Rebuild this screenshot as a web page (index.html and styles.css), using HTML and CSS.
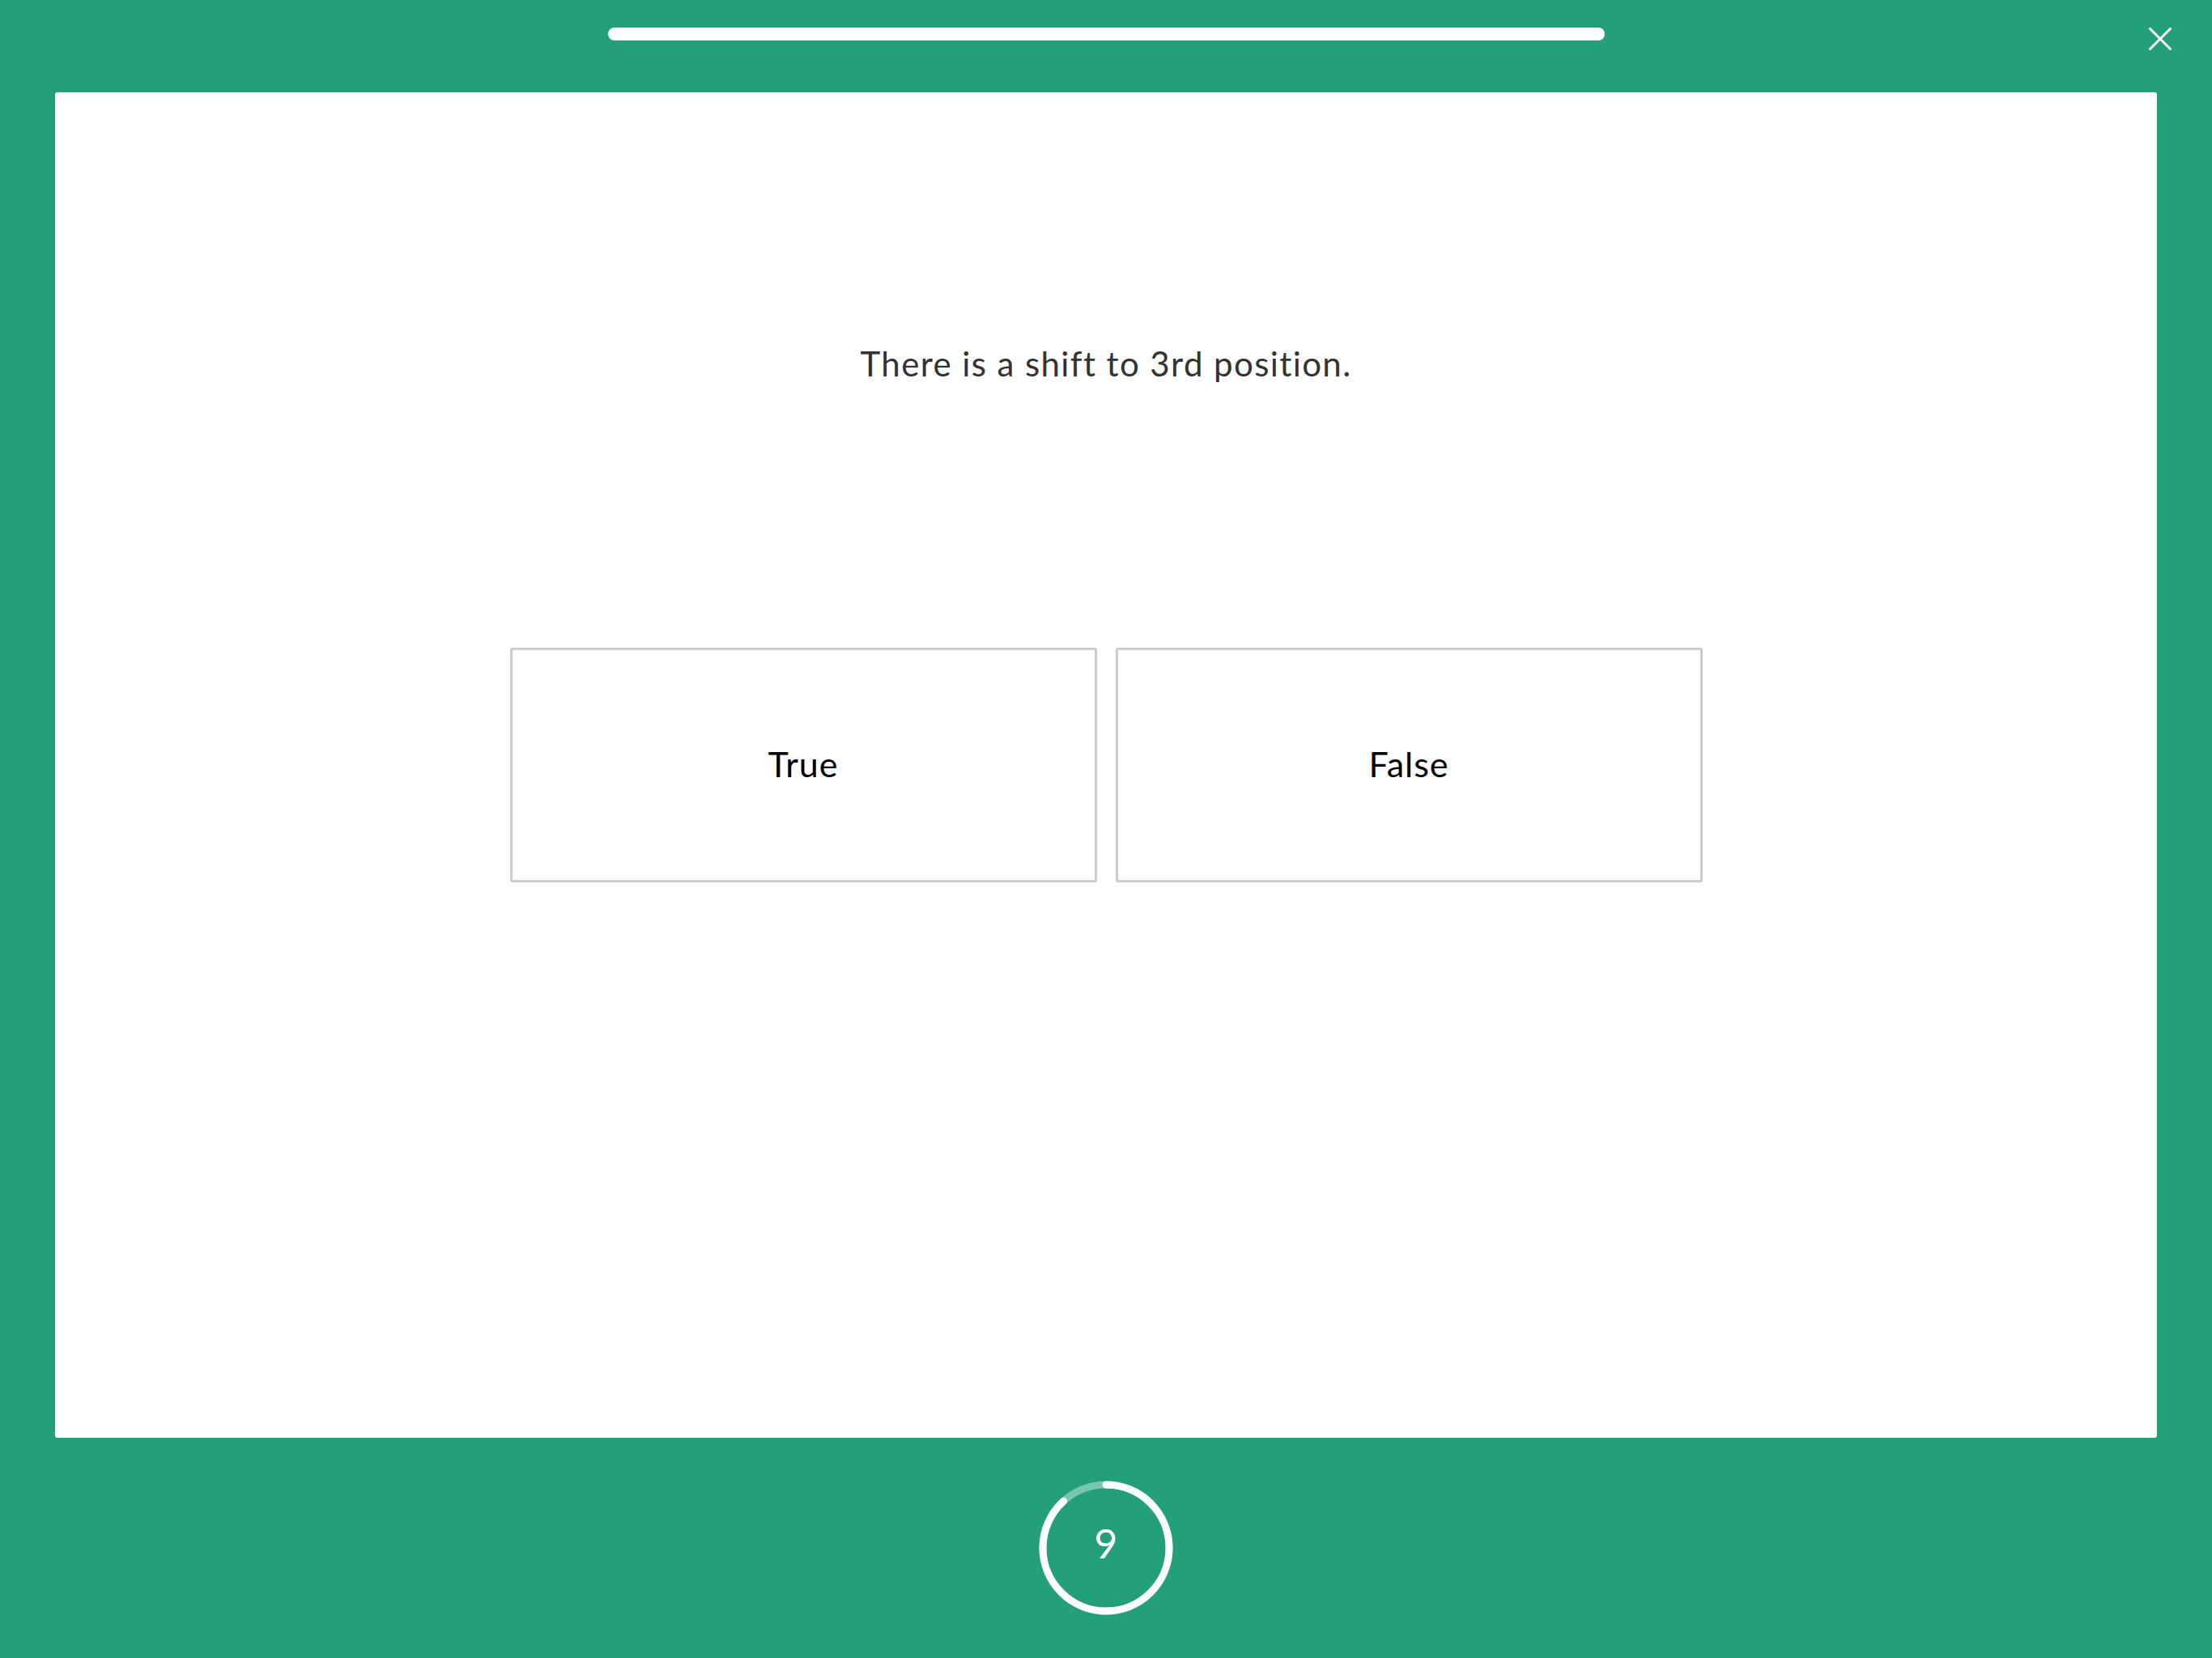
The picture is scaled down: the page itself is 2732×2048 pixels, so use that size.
FILE: index.html
```html
<!DOCTYPE html>
<html lang="en">
<head>
<meta charset="utf-8">
<title>Quiz</title>
<link rel="stylesheet" href="styles.css">
</head>
<body>
<div class="screen">
  <header class="topbar">
    <div class="spacer"></div>
    <div class="progress"></div>
    <div class="close-wrap">
      <button class="close" aria-label="Close">
        <svg width="28" height="28" viewBox="0 0 28 28"><path d="M1.5 1.5 L26.5 26.5 M26.5 1.5 L1.5 26.5" stroke="#fff" stroke-width="3" stroke-linecap="round" fill="none"/></svg>
      </button>
    </div>
  </header>
  <main class="card">
    <p class="question">There is a shift to 3rd position.</p>
    <div class="answers">
      <button class="answer">True</button>
      <button class="answer">False</button>
    </div>
  </main>
  <footer class="bottombar">
    <div class="timer">
      <svg class="ring" width="174" height="174" viewBox="0 0 174 174">
        <circle cx="87" cy="87" r="78" class="ring-track"/>
        <circle cx="87" cy="87" r="78" class="ring-fill" transform="rotate(-90 87 87)"/>
      </svg>
      <span class="count">9</span>
    </div>
  </footer>
</div>
</body>
</html>
```

FILE: styles.css
```css
* { box-sizing: border-box; }
html, body {
  margin: 0;
  padding: 0;
}
body {
  background: #23a07a;
  font-family: Lato, "Open Sans", "Liberation Sans", sans-serif;
}
.screen {
  width: 2732px;
  height: 2048px;
  display: flex;
  flex-direction: column;
}
.topbar {
  height: 114px;
  display: grid;
  grid-template-columns: 1fr 1231px 1fr;
  align-items: start;
}
.progress {
  margin-top: 34px;
  height: 16px;
  border-radius: 8px;
  background: #ffffff;
}
.close-wrap {
  display: flex;
  justify-content: flex-end;
  padding-right: 50px;
  padding-top: 34px;
}
.close {
  background: none;
  border: 0;
  padding: 0;
  width: 28px;
  height: 28px;
  display: block;
}
.close svg { display: block; }
.card {
  margin: 0 68px;
  height: 1662px;
  background: #ffffff;
  border-radius: 3px;
  display: flex;
  flex-direction: column;
  align-items: center;
  padding-top: 305px;
}
.question {
  margin: 0;
  font-size: 42px;
  line-height: 60px;
  color: #333333;
  letter-spacing: 1.4px;
}
.answers {
  margin-top: 321px;
  display: flex;
  gap: 23px;
}
.answer {
  width: 725px;
  height: 290px;
  background: #ffffff;
  border: 3px solid #cccccc;
  border-radius: 3px;
  font-family: Lato, "Open Sans", "Liberation Sans", sans-serif;
  font-size: 43px;
  letter-spacing: 1px;
  color: #000000;
  padding: 0 0 4px 0;
}
.bottombar {
  flex: 1;
  display: flex;
  align-items: center;
  justify-content: center;
}
.timer {
  width: 174px;
  height: 174px;
  display: flex;
  align-items: center;
  justify-content: center;
  position: relative;
}
.ring {
  position: absolute;
  left: 0;
  top: 0;
}
.ring-track {
  fill: none;
  stroke: rgba(255,255,255,0.4);
  stroke-width: 9;
}
.ring-fill {
  fill: none;
  stroke: #ffffff;
  stroke-width: 9;
  stroke-linecap: round;
  stroke-dasharray: 432 490;
}
.count {
  position: relative;
  top: -6px;
  color: #ffffff;
  font-size: 50px;
  line-height: 1;
}
```
